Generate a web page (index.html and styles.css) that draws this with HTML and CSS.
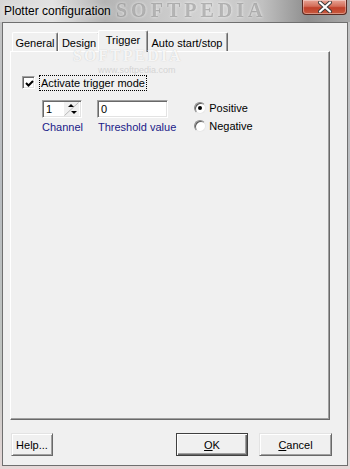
FILE: index.html
```html
<!DOCTYPE html>
<html>
<head>
<meta charset="utf-8">
<link rel="stylesheet" href="styles.css">
</head>
<body>
<div class="window">
  <div class="titlebar">
    <span class="title">Plotter configuration</span>
    <span class="wm wm-title">SOFTPEDIA</span>
    <div class="close">
      <svg width="16" height="12" viewBox="0 0 16 12"><path d="M3 1.5 L13 10.5 M13 1.5 L3 10.5" stroke="#3a3a3a" stroke-width="4" stroke-linecap="round"/><path d="M3 1.5 L13 10.5 M13 1.5 L3 10.5" stroke="#ffffff" stroke-width="2.2" stroke-linecap="round"/></svg>
    </div>
  </div>
  <div class="client">
    <span class="wm wm-tab">SOFTPEDIA</span>
    <span class="wm wm-url">www.softpedia.com</span>
    <div class="tabs">
      <div class="tab t-general">General</div>
      <div class="tab t-design">Design</div>
      <div class="tab active">Trigger</div>
      <div class="tab t-auto">Auto start/stop</div>
    </div>
    <div class="panel">
      <div class="check-row">
        <span class="checkbox"><svg width="9" height="9" viewBox="0 0 9 9"><path d="M1 4 L3.5 6.5 L8 2" fill="none" stroke="#000" stroke-width="2"/></svg></span>
        <span class="focus">Activate trigger mode</span>
      </div>
      <div class="controls">
        <div class="field">
          <div class="edit spin">
            <span class="val">1</span>
            <svg class="spin-btns" width="15" height="14" viewBox="0 0 15 14"><path d="M0.5 13.5 L14.5 0.5" stroke="#b8b8b8" stroke-width="1"/><path d="M4 5 L7 2 L10 5 Z" fill="#000"/><path d="M7 9 L10 12 L13 9 Z" fill="#000"/></svg>
          </div>
          <div class="caption">Channel</div>
        </div>
        <div class="field">
          <div class="edit thresh"><span class="val">0</span></div>
          <div class="caption">Threshold value</div>
        </div>
        <div class="radios">
          <div class="radio-row"><span class="radio checked"></span><span>Positive</span></div>
          <div class="radio-row"><span class="radio"></span><span>Negative</span></div>
        </div>
      </div>
    </div>
    <div class="buttons">
      <div class="btn help">Help...</div>
      <div class="spacer"></div>
      <div class="btn default"><u>O</u>K</div>
      <div class="btn cancel"><u>C</u>ancel</div>
    </div>
  </div>
</div>
</body>
</html>
```
FILE: styles.css
```css
* { box-sizing: border-box; }
html, body { margin: 0; padding: 0; }
body {
  width: 350px;
  height: 469px;
  overflow: hidden;
  font-family: "Liberation Sans", Arial, sans-serif;
  font-size: 11px;
  color: #000;
}
.window {
  width: 350px;
  height: 469px;
  display: flex;
  flex-direction: column;
  background: linear-gradient(to bottom, #c4c4c4 0%, #b8bcc0 40%, #c0c4c0 80%, #e6d8d8 100%);
}
.titlebar {
  height: 22px;
  flex: none;
  position: relative;
  display: flex;
  align-items: center;
  padding-left: 4px;
  overflow: hidden;
  background: linear-gradient(to right, #d6d6d6 0%, #e2e2e2 15%, #b4b4b4 30%, #c8c8c8 45%, #d4d4d4 60%, #c0c0c0 75%, #8e8e8e 88%, #a8a8a8 100%);
}
.title {
  font-size: 12px;
  line-height: 22px;
  position: relative;
  z-index: 2;
  text-shadow: 0 0 6px rgba(255,255,255,0.9);
}
.wm {
  position: absolute;
  pointer-events: none;
  white-space: nowrap;
  font-family: "Liberation Serif", serif;
  font-weight: bold;
}
.wm-title {
  left: 116px;
  top: 0;
  line-height: 21px;
  font-size: 20px;
  letter-spacing: 4px;
  color: rgba(100,100,100,0.4);
  text-shadow: 0 0 3px rgba(255,255,255,0.8);
  filter: blur(0.7px);
  z-index: 1;
}
.close {
  position: absolute;
  right: 3px;
  top: 0;
  width: 45px;
  height: 15px;
  z-index: 3;
  border: 1px solid #5a2a22;
  border-top: none;
  border-radius: 0 0 4px 4px;
  background: linear-gradient(to bottom, #e8a496 0%, #d36d58 45%, #c0402a 55%, #c85a3e 100%);
  box-shadow: inset 0 0 0 1px rgba(255,255,255,0.35);
  display: flex;
  align-items: center;
  justify-content: center;
}
.client {
  flex: 1;
  margin: 0 2px 3px 2px;
  border: 1px solid #6f6f6f;
  background: #f0f0f0;
  padding: 7px 0 0 7px;
  display: flex;
  flex-direction: column;
  position: relative;
}
.wm-tab {
  left: 70px;
  top: 24px;
  font-size: 16px;
  letter-spacing: 2px;
  color: rgba(255,255,255,0.85);
  text-shadow: 0 0 1px rgba(120,120,120,0.4);
  z-index: 5;
}
.wm-url {
  left: 95px;
  top: 42px;
  line-height: 10px;
  font-family: "Liberation Sans", sans-serif;
  font-weight: normal;
  font-size: 9px;
  color: rgba(205,205,205,0.8);
  z-index: 5;
}
.tabs {
  display: flex;
  align-items: flex-end;
  height: 21px;
  padding-left: 2px;
  flex: none;
}
.tab {
  height: 19px;
  display: flex;
  align-items: center;
  justify-content: center;
  border-top: 1px solid #ffffff;
  border-left: 1px solid #ffffff;
  border-right: 1px solid #696969;
  box-shadow: inset -1px 0 0 #a0a0a0;
  border-radius: 2px 2px 0 0;
  background: #f0f0f0;
  white-space: nowrap;
  padding-top: 1px;
}
.t-general { width: 46px; }
.t-design { width: 42px; }
.t-auto { width: 82px; }
.active {
  width: 50px;
  height: 22px;
  margin: 0 -2px -1px -2px;
  position: relative;
  z-index: 2;
  padding-top: 0;
  padding-bottom: 3px;
}
.panel {
  width: 320px;
  height: 369px;
  flex: none;
  border-top: 1px solid #ffffff;
  border-left: 1px solid #ffffff;
  border-right: 1px solid #696969;
  border-bottom: 1px solid #696969;
  box-shadow: inset -1px -1px 0 #a0a0a0;
  padding: 22px 0 0 11px;
}
.check-row {
  display: flex;
  align-items: center;
  height: 17px;
}
.checkbox {
  width: 13px;
  height: 13px;
  background: #fff;
  border: 1px solid;
  border-color: #a0a0a0 #ffffff #ffffff #a0a0a0;
  box-shadow: inset 1px 1px 0 #696969, inset -1px -1px 0 #e3e3e3;
  display: flex;
  align-items: center;
  justify-content: center;
  padding: 1px 0 0 1px;
}
.checkbox svg { display: block; }
.focus {
  margin-left: 4px;
  height: 16px;
  line-height: 14px;
  padding: 0 1px;
  border: 1px dotted #000;
}
.controls {
  display: flex;
  margin: 9px 0 0 20px;
  align-items: flex-start;
}
.field {
  display: flex;
  flex-direction: column;
}
.edit {
  height: 18px;
  background: #fff;
  border: 1px solid;
  border-color: #a0a0a0 #ffffff #ffffff #a0a0a0;
  box-shadow: inset 1px 1px 0 #696969, inset -1px -1px 0 #e3e3e3;
  display: flex;
  align-items: center;
  padding-left: 3px;
}
.spin { width: 40px; }
.spin .val { flex: 1; }
.spin-btns { display: block; margin-right: 2px; background: #f0f0f0; }
.thresh { width: 71px; margin-left: 14px; }
.field:nth-child(2) .caption { margin-left: 15px; }
.caption {
  margin-top: 3px;
  line-height: 13px;
  color: #1a1a88;
  white-space: nowrap;
}
.radios {
  margin-left: 18px;
  margin-top: -1px;
  display: flex;
  flex-direction: column;
}
.radio-row {
  height: 18px;
  display: flex;
  align-items: center;
  gap: 3px;
}
.radio {
  width: 12px;
  height: 12px;
  border-radius: 50%;
  background: #fff;
  border: 1px solid;
  border-color: #8a8a8a #e8e8e8 #e8e8e8 #8a8a8a;
  box-shadow: inset 1px 1px 0 #5a5a5a;
  display: flex;
  align-items: center;
  justify-content: center;
}
.radio.checked::after {
  content: "";
  width: 4px;
  height: 4px;
  border-radius: 50%;
  background: #000;
}
.buttons {
  display: flex;
  margin-top: 13px;
  height: 23px;
  flex: none;
}
.btn {
  height: 23px;
  display: flex;
  align-items: center;
  justify-content: center;
  background: #f0f0f0;
  border: 1px solid;
  border-color: #e3e3e3 #696969 #696969 #e3e3e3;
  box-shadow: inset 1px 1px 0 #ffffff, inset -1px -1px 0 #a0a0a0;
}
.btn u { text-decoration: underline; }
.help { width: 42px; margin-left: 1px; }
.spacer { flex: 1; }
.default {
  width: 72px;
  border: 1px solid #404040;
  box-shadow: inset 1px 1px 0 #ffffff, inset -1px -1px 0 #696969, inset -2px -2px 0 #a0a0a0;
}
.cancel { width: 73px; margin-left: 11px; margin-right: 15px; }
```
